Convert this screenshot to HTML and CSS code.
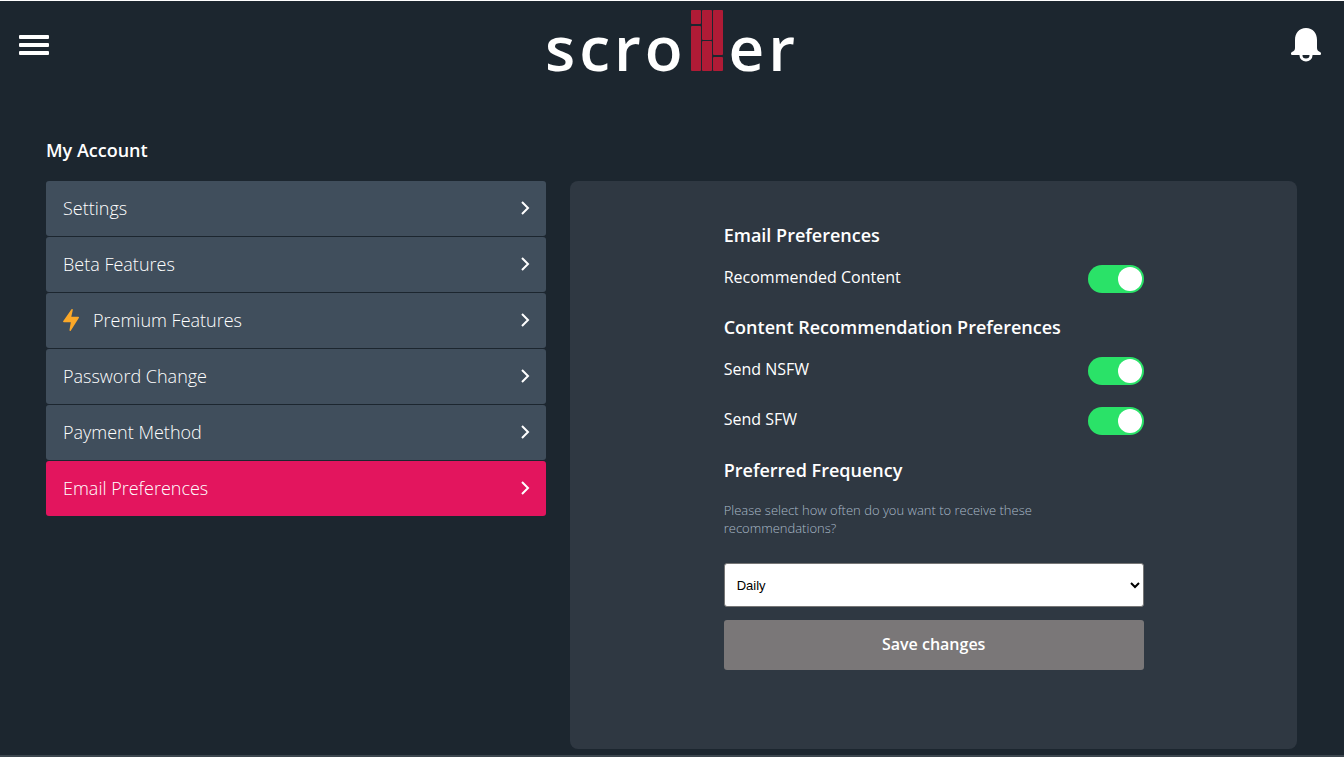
FILE: index.html
```html
<!DOCTYPE html>
<html lang="en">
<head>
    <meta charset="UTF-8">
    <meta name="viewport" content="width=device-width, initial-scale=1">
    <title>scroller - Email Preferences</title>
    <link rel="stylesheet" href="styles.css">
</head>
<body>
    <header class="topbar">
        <button class="icon-button" type="button" aria-label="Menu">
            <svg width="30" height="22" viewBox="0 0 30 22" fill="#fff">
                <rect y="1" width="30" height="4" rx="1"/>
                <rect y="9" width="30" height="4" rx="1"/>
                <rect y="17" width="30" height="4" rx="1"/>
            </svg>
        </button>
        <a class="logo" href="#">
            <span>scro</span>
            <svg class="logo-bars" width="32" height="61" viewBox="0 0 32 61" fill="#af1b36">
                <rect x="0" y="0" width="10" height="14" rx="1"/>
                <rect x="0" y="16" width="10" height="45" rx="1"/>
                <rect x="11" y="0" width="10" height="30" rx="1"/>
                <rect x="11" y="31" width="10" height="30" rx="1"/>
                <rect x="22" y="0" width="10" height="45" rx="1"/>
                <rect x="22" y="47" width="10" height="14" rx="1"/>
            </svg>
            <span>er</span>
        </a>
        <button class="icon-button" type="button" aria-label="Notifications">
            <svg width="30" height="34" viewBox="0 0 30 34">
                <path fill="#fff" d="M15 0C8 0 4 5 4 12v8c0 2-1 3-3 4-1.600 1-1.300 3 .5 3h27c1.800 0 2.100-2 .5-3-2-1-3-2-3-4v-8C26 5 22 0 15 0z"/>
                <path fill="none" stroke="#fff" stroke-width="3" d="M10 26v1.500a5 4.500 0 0 0 10 0V26"/>
                <path fill="#1c252e" d="M12 27h6a3 3 0 0 1-6 0z"/>
            </svg>
        </button>
    </header>

    <main class="account">
        <h1>My Account</h1>
        <div class="columns">
            <nav class="menu">
                <a href="#">Settings <svg class="chevron" width="9" height="16" viewBox="0 0 9 16"><path d="M1 2l6 6-6 6"/></svg></a>
                <a href="#">Beta Features <svg class="chevron" width="9" height="16" viewBox="0 0 9 16"><path d="M1 2l6 6-6 6"/></svg></a>
                <a href="#">
                    <svg class="bolt" width="16" height="22" viewBox="0 0 16 22"><path d="M8.500.3c.7-.6 1.600-.1 1.300.8L8.300 7.800h6.900c.8 0 1 .7.600 1.300L7.900 21.400c-.6.900-1.600.5-1.400-.5l1.300-7.600H.9c-.8 0-1.100-.7-.6-1.300z"/></svg>
                    Premium Features
                    <svg class="chevron" width="9" height="16" viewBox="0 0 9 16"><path d="M1 2l6 6-6 6"/></svg>
                </a>
                <a href="#">Password Change <svg class="chevron" width="9" height="16" viewBox="0 0 9 16"><path d="M1 2l6 6-6 6"/></svg></a>
                <a href="#">Payment Method <svg class="chevron" width="9" height="16" viewBox="0 0 9 16"><path d="M1 2l6 6-6 6"/></svg></a>
                <a class="active" href="#">Email Preferences <svg class="chevron" width="9" height="16" viewBox="0 0 9 16"><path d="M1 2l6 6-6 6"/></svg></a>
            </nav>

            <section class="panel">
                <form class="preferences">
                    <h2>Email Preferences</h2>
                    <div class="option">
                        <label for="recommended">Recommended Content</label>
                        <input class="switch" type="checkbox" id="recommended" checked>
                    </div>
                    <h2>Content Recommendation Preferences</h2>
                    <div class="option">
                        <label for="nsfw">Send NSFW</label>
                        <input class="switch" type="checkbox" id="nsfw" checked>
                    </div>
                    <div class="option">
                        <label for="sfw">Send SFW</label>
                        <input class="switch" type="checkbox" id="sfw" checked>
                    </div>
                    <h2>Preferred Frequency</h2>
                    <label class="hint" for="frequency">Please select how often do you want to receive these recommendations?</label>
                    <div class="select-box">
                        <select id="frequency">
                            <option>Daily</option>
                        </select>
                        <svg class="select-arrow" width="10" height="7" viewBox="0 0 10 7"><path d="M1 1l4 4 4-4"/></svg>
                    </div>
                    <button class="save" type="button">Save changes</button>
                </form>
            </section>
        </div>
    </main>
</body>
</html>
```

FILE: styles.css
```css
* {
    box-sizing: border-box;
}
body {
    margin: 0;
    min-height: 100vh;
    background-color: #1c262f;
    border-top: 1px solid #fff;
    border-bottom: 2px solid #3c464e;
    color: #fff;
    font-family: "Open Sans", "Noto Sans", sans-serif;
}
h1, h2 {
    margin: 0;
    font-size: 18px;
    font-weight: 600;
    line-height: 24px;
}
.topbar {
    display: grid;
    grid-template-columns: 1fr auto 1fr;
    align-items: center;
    height: 88px;
    padding: 0 23px 0 19px;
}
.icon-button {
    display: block;
    justify-self: start;
    padding: 0;
    border: none;
    background: none;
    cursor: pointer;
}
.icon-button:last-child {
    justify-self: end;
}
.icon-button svg {
    display: block;
}
.logo {
    display: flex;
    align-items: baseline;
    padding: 4px 0 0 4px;
    color: #fff;
    font-size: 62px;
    font-weight: 600;
    letter-spacing: 4px;
    line-height: 80px;
    text-decoration: none;
}
.logo-bars {
    margin: 0 6px 0 4px;
}
.account {
    padding: 49px 47px 6px 46px;
}
.columns {
    display: flex;
    gap: 24px;
    margin-top: 19px;
}
.menu {
    display: flex;
    flex-direction: column;
    gap: 1px;
    width: 40%;
}
.menu a {
    display: flex;
    align-items: center;
    height: 55px;
    padding: 0 16px 2px 17px;
    border-radius: 3px;
    background-color: #404e5c;
    color: #fff;
    font-size: 18px;
    font-weight: 300;
    text-decoration: none;
}
.menu a.active {
    background-color: #e3155e;
}
.bolt {
    margin-right: 14px;
    fill: #fba828;
}
.chevron {
    margin-left: auto;
    fill: none;
    stroke: #fff;
    stroke-width: 2;
}
.panel {
    flex: 1;
    min-height: 568px;
    padding: 42px 24px;
    border-radius: 8px;
    background-color: #2f3842;
}
.preferences {
    max-width: 420px;
    margin: 0 auto;
}
.option {
    display: flex;
    justify-content: space-between;
    height: 28px;
    margin: 18px 0 22px;
    font-size: 16px;
    line-height: 24px;
}
.option + .option {
    margin: 21px 0 23px;
}
.switch {
    appearance: none;
    width: 56px;
    height: 28px;
    margin: 0;
    padding: 2px;
    border-radius: 14px;
    background-color: #76777a;
    cursor: pointer;
}
.switch::before {
    content: "";
    display: block;
    width: 24px;
    height: 24px;
    border-radius: 50%;
    background-color: #fff;
}
.switch:checked {
    background-color: #2ae268;
}
.switch:checked::before {
    margin-left: auto;
}
.hint {
    display: block;
    max-width: 340px;
    margin: 19px 0 26px;
    color: #a9b9c8;
    font-size: 13px;
    font-weight: 300;
    line-height: 18px;
}
.select-box {
    position: relative;
    margin-bottom: 13px;
}
.select-box select {
    appearance: none;
    display: block;
    width: 100%;
    height: 44px;
    padding: 0 12px;
    border: 1px solid #767676;
    border-radius: 3px;
    background-color: #fff;
    color: #000;
    font-family: "Liberation Sans", Arial, sans-serif;
    font-size: 13px;
}
.select-arrow {
    position: absolute;
    top: 19px;
    right: 4px;
    fill: none;
    stroke: #000;
    stroke-width: 2;
    pointer-events: none;
}
.save {
    display: block;
    width: 100%;
    height: 50px;
    padding-bottom: 3px;
    border: none;
    border-radius: 3px;
    background-color: #7a7778;
    color: #fff;
    font-family: inherit;
    font-size: 16px;
    font-weight: 600;
    cursor: pointer;
}
```
